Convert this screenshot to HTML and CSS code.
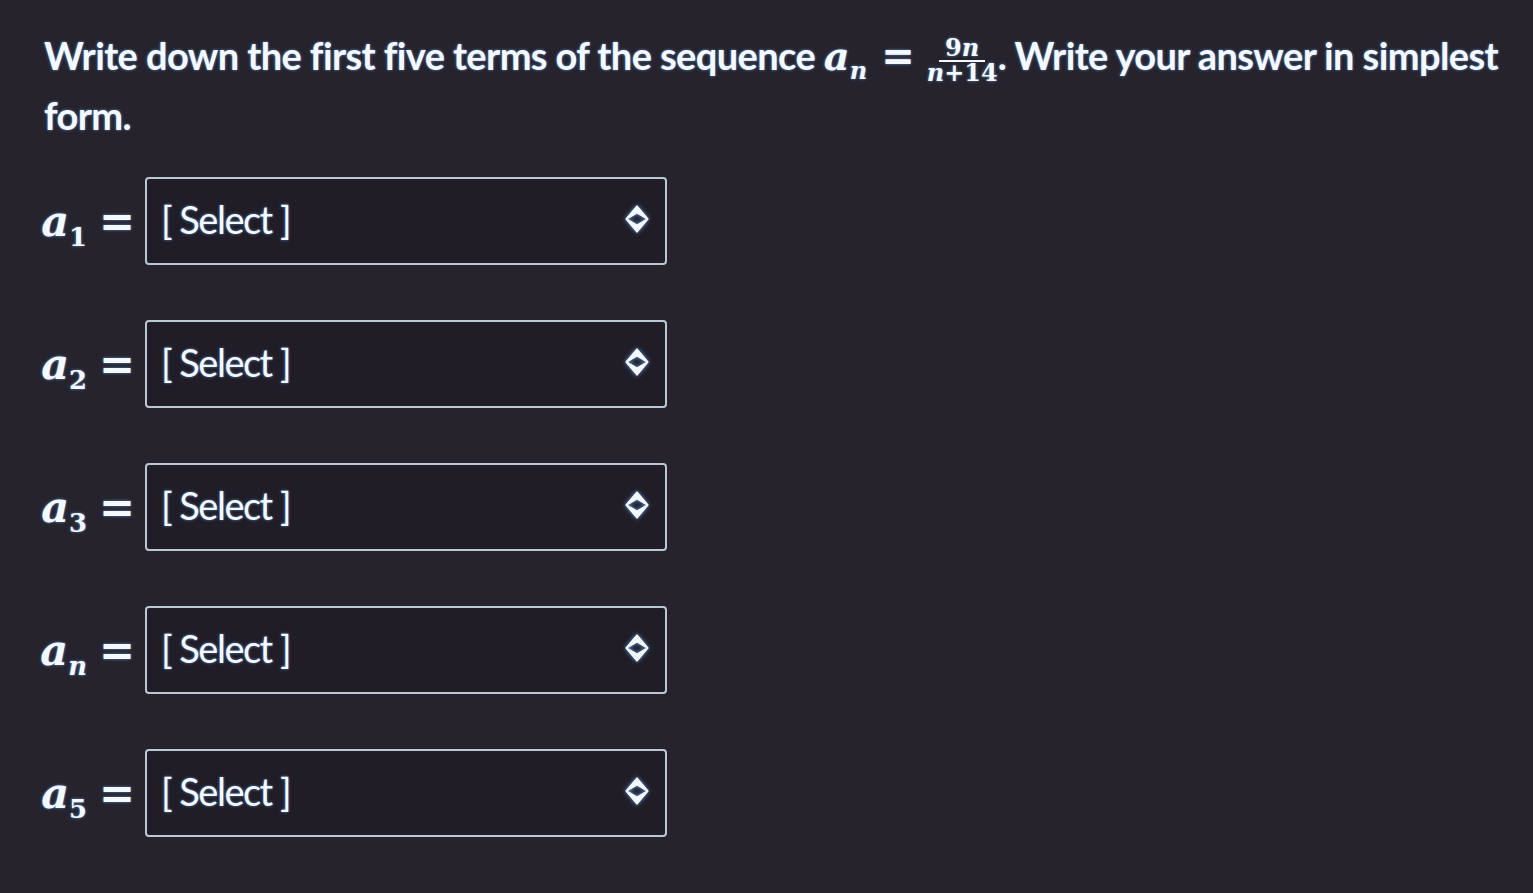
FILE: index.html
```html
<html>

<head>
    <title>Sequence Quiz</title>

    <link rel="stylesheet" href="styles.css">
</head>

<body>
    <div class="question">
        <p class="prompt">
            Write down the first five terms of the sequence
            <span class="math"><i>a</i><sub><i>n</i></sub><span class="eq">=</span><span class="frac"><span class="num">9<i>n</i></span><span class="den"><i>n</i>+14</span></span></span>.
            Write your answer in simplest form.
        </p>

        <div class="answers">
            <div class="row">
                <span class="label"><i>a</i><sub>1</sub><span class="eq">=</span></span>
                <div class="select">
                    <span>[ Select ]</span>
                    <svg class="arrows" viewBox="0 0 24 28"><path d="M12 1 L23 14 L12 27 L1 14 Z M12 8 L22 14 L12 20 L2 14 Z" /></svg>
                </div>
            </div>

            <div class="row">
                <span class="label"><i>a</i><sub>2</sub><span class="eq">=</span></span>
                <div class="select">
                    <span>[ Select ]</span>
                    <svg class="arrows" viewBox="0 0 24 28"><path d="M12 1 L23 14 L12 27 L1 14 Z M12 8 L22 14 L12 20 L2 14 Z" /></svg>
                </div>
            </div>

            <div class="row">
                <span class="label"><i>a</i><sub>3</sub><span class="eq">=</span></span>
                <div class="select">
                    <span>[ Select ]</span>
                    <svg class="arrows" viewBox="0 0 24 28"><path d="M12 1 L23 14 L12 27 L1 14 Z M12 8 L22 14 L12 20 L2 14 Z" /></svg>
                </div>
            </div>

            <div class="row">
                <span class="label"><i>a</i><sub><i>n</i></sub><span class="eq">=</span></span>
                <div class="select">
                    <span>[ Select ]</span>
                    <svg class="arrows" viewBox="0 0 24 28"><path d="M12 1 L23 14 L12 27 L1 14 Z M12 8 L22 14 L12 20 L2 14 Z" /></svg>
                </div>
            </div>

            <div class="row">
                <span class="label"><i>a</i><sub>5</sub><span class="eq">=</span></span>
                <div class="select">
                    <span>[ Select ]</span>
                    <svg class="arrows" viewBox="0 0 24 28"><path d="M12 1 L23 14 L12 27 L1 14 Z M12 8 L22 14 L12 20 L2 14 Z" /></svg>
                </div>
            </div>
        </div>
    </div>
</body>

</html>
```

FILE: styles.css
```css
body {
    margin: 0;
    background-color: #26232d;
    color: #f4f8ff;
    font-family: Lato, "Open Sans", sans-serif;
}

.question {
    padding: 25px 20px 0 20px;
}

.prompt {
    margin: 0 0 0 24px;
    font-size: 38px;
    font-weight: bold;
    line-height: 60px;
    letter-spacing: -0.6px;
    text-shadow: 0 0 3px rgba(110, 180, 255, 0.7);
}

.math,
.label {
    font-family: "DejaVu Serif", "Liberation Serif", serif;
    font-weight: bold;
    letter-spacing: 0;
    line-height: 0;
    text-shadow: 0 0 3px rgba(110, 180, 255, 0.7);
}

.math {
    font-size: 40px;
}

.math i,
.label i {
    font-style: italic;
}

.math sub,
.label sub {
    font-size: 0.6em;
    line-height: 0;
}

.eq {
    font-family: "DejaVu Sans", sans-serif;
    margin: 0 12px 0 14px;
}

.frac {
    display: inline-flex;
    flex-direction: column;
    align-items: center;
    vertical-align: middle;
    font-size: 24px;
    line-height: 22px;
}

.frac .num {
    border-bottom: 2px solid #f4f8ff;
    padding: 0 6px 1px 6px;
}

.answers {
    margin-top: 32px;
    display: flex;
    flex-direction: column;
    gap: 55px;
}

.row {
    display: flex;
    align-items: center;
    gap: 10px;
}

.label {
    width: 115px;
    text-align: right;
    font-size: 43px;
    line-height: 50px;
    white-space: nowrap;
}

.label .eq {
    margin: 0 0 0 12px;
}

.select {
    width: 522px;
    height: 88px;
    box-sizing: border-box;
    border: 2px solid #bcc7d6;
    border-radius: 4px;
    background-color: #201d27;
    display: flex;
    align-items: center;
    justify-content: space-between;
    padding: 0 16px 4px 14px;
    font-size: 38px;
    letter-spacing: -1.5px;
    text-shadow: 0 0 3px rgba(110, 180, 255, 0.7);
}

.arrows {
    width: 24px;
    height: 28px;
    fill: #f4f8ff;
    fill-rule: evenodd;
    stroke: #f4f8ff;
    stroke-width: 1.2;
    stroke-linejoin: round;
    filter: drop-shadow(0 0 2px rgba(110, 180, 255, 0.8));
}
```
